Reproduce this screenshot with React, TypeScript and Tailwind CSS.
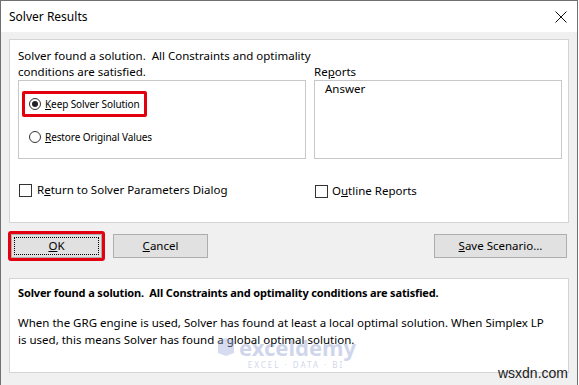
import React from "react";

const FONT = { fontFamily: '"Noto Sans", "Open Sans", sans-serif' };

function Radio({ checked }: { checked?: boolean }) {
    return (
        <span className="w-[12px] h-[12px] rounded-full border border-[#333] bg-white flex items-center justify-center flex-shrink-0">
            {checked && <span className="w-[6px] h-[6px] rounded-full bg-[#222]" />}
        </span>
    );
}

function Checkbox() {
    return <span className="w-[13px] h-[13px] border border-[#333] bg-white flex-shrink-0" />;
}

function Btn({ children, className = "" }: { children: React.ReactNode; className?: string }) {
    return (
        <div className={`h-[24px] bg-[#e1e1e1] border border-[#adadad] flex items-center justify-center text-[11.5px] text-black ${className}`}>
            {children}
        </div>
    );
}

export default function App() {
    return (
        <div className="w-[579px] h-[385px] overflow-hidden bg-white" style={FONT}>
            <div className="relative w-[578px] h-[385px] border-x border-t border-[#707070] flex flex-col">
                {/* title bar */}
                <div className="h-[31px] bg-white flex items-center justify-between pl-[8px] pr-[8px] flex-shrink-0">
                    <span className="text-[12px] text-black">Solver Results</span>
                    <svg width="12" height="12" viewBox="0 0 12 12" className="mr-[2px]">
                        <path d="M0.5 0.5 L11.5 11.5 M11.5 0.5 L0.5 11.5" stroke="#111" strokeWidth="1" />
                    </svg>
                </div>

                <div className="flex-1 bg-[#f0f0f0] pl-[8px] pt-[7px]">
                    {/* top panel */}
                    <div className="w-[560px] h-[184px] bg-white border border-[#d4d4d4] pl-[8px] pt-[8px] text-[11.5px] text-black leading-[16px]">
                        <div className="flex">
                            <div className="w-[296px]">
                                <div className="whitespace-nowrap">
                                    Solver found a solution.&nbsp; All Constraints and optimality
                                    <br />
                                    conditions are satisfied.
                                </div>
                                <div className="w-[288px] h-[79px] border border-[#c8c8c8] pl-[3px] pt-[10px]">
                                    <div className="w-[125px] h-[26px] border-[3px] border-[#e3000f] rounded-[2px] flex items-center gap-[4px] pl-[4px] text-[10px] whitespace-nowrap tracking-[-0.1px]">
                                        <Radio checked />
                                        <span>
                                            <span className="underline">K</span>eep Solver Solution
                                        </span>
                                    </div>
                                    <div className="mt-[12px] flex items-center gap-[4px] pl-[7px] text-[10px] whitespace-nowrap tracking-[-0.1px]">
                                        <Radio />
                                        <span>
                                            <span className="underline">R</span>estore Original Values
                                        </span>
                                    </div>
                                </div>
                            </div>
                            <div className="pt-[16px]">
                                <div>
                                    Re<span className="underline">p</span>orts
                                </div>
                                <div className="w-[248px] h-[79px] border border-[#c8c8c8] pl-[10px]">
                                    Answer
                                </div>
                            </div>
                        </div>
                        <div className="flex mt-[22px]">
                            <div className="w-[297px] flex items-center gap-[5px] pl-[1px]">
                                <Checkbox />
                                <span>
                                    R<span className="underline">e</span>turn to Solver Parameters Dialog
                                </span>
                            </div>
                            <div className="flex items-center gap-[4px] mt-[2px]">
                                <Checkbox />
                                <span>
                                    O<span className="underline">u</span>tline Reports
                                </span>
                            </div>
                        </div>
                    </div>

                    {/* buttons */}
                    <div className="flex items-center w-[560px] mt-[8px] h-[30px]">
                        <div className="w-[97px] h-[30px] border-[3px] border-[#e3000f] rounded-[3px] -ml-[1px] flex items-center justify-center">
                            <Btn className="w-[91px]">
                                <div className="w-[85px] h-[18px] border border-dotted border-black flex items-center justify-center">
                                    <span className="underline">O</span>K
                                </div>
                            </Btn>
                        </div>
                        <Btn className="w-[95px] ml-[8px]">
                            <span className="underline">C</span>ancel
                        </Btn>
                        <Btn className="w-[133px] ml-auto mr-[2px]">
                            <span className="underline">S</span>ave Scenario...
                        </Btn>
                    </div>

                    {/* bottom panel */}
                    <div className="w-[560px] h-[95px] mt-[17px] bg-white border border-[#d4d4d4] pl-[8px] pt-[5px] text-[11.5px] text-black leading-[17px]">
                        <div className="font-bold text-[11px] tracking-[-0.15px]">
                            Solver found a solution.&nbsp; All Constraints and optimality conditions are satisfied.
                        </div>
                        <div className="mt-[13px] pr-[20px]">
                            When the GRG engine is used, Solver has found at least a local optimal solution. When Simplex LP is used, this means Solver has found a global optimal solution.
                        </div>
                    </div>
                </div>

                {/* watermark */}
                <div className="absolute left-[215px] top-[334px] flex flex-col items-center opacity-40 pointer-events-none">
                    <div className="flex items-center gap-[3px]">
                        <svg width="20" height="20" viewBox="0 0 20 20">
                            <path d="M2 4 L10 1 L18 4 L18 16 L10 19 L2 16 Z" fill="#9aa8d8" />
                        </svg>
                        <span className="text-[22px] font-bold text-[#8a9ad0] leading-[24px]">exceldemy</span>
                    </div>
                    <span className="text-[8px] tracking-[2px] text-[#8a9ad0] ml-[20px]">EXCEL · DATA · BI</span>
                </div>

                <div
                    className="absolute right-[9px] top-[364px] text-[14px] text-[#222] leading-[16px]"
                    style={{ fontFamily: '"Liberation Sans", Arial, sans-serif' }}
                >
                    wsxdn.com
                </div>
            </div>
        </div>
    );
}
